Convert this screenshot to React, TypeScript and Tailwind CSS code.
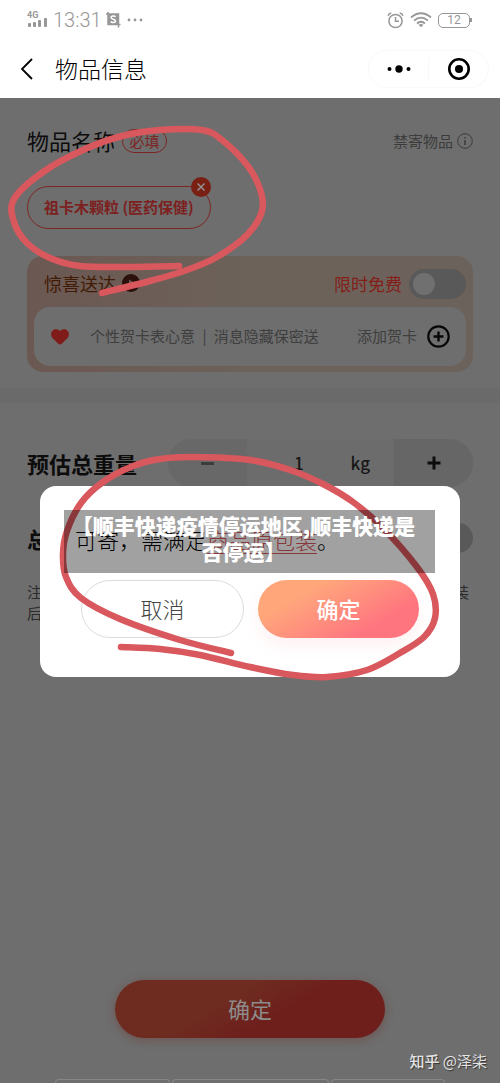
import { useState } from 'react'

function StatusBar() {
  return (
    <div className="flex h-10 items-center justify-between pr-7 pl-[27px] text-[#979797]">
      <div className="flex items-center">
        <svg width="22" height="20" viewBox="0 0 22 20" fill="currentColor" aria-hidden="true">
          <text x="0" y="8" fontSize="9" fontWeight="700" fontFamily="Roboto, sans-serif">
            4G
          </text>
          <rect x="1" y="13" width="3" height="4" rx="1" />
          <rect x="6" y="12" width="3" height="5" rx="1" />
          <rect x="11" y="10" width="3" height="7" rx="1" />
          <rect x="17" y="8" width="3" height="9" rx="1" />
        </svg>
        <span className="ml-1 font-[Roboto,sans-serif] text-xl leading-5 font-light">13:31</span>
        <svg className="ml-1" width="15" height="16" viewBox="0 0 15 16" aria-hidden="true">
          <path d="M0 2h12.500v13.500" fill="none" stroke="currentColor" strokeWidth="1.500" />
          <path d="M2 0v12.500h12.500" fill="none" stroke="currentColor" strokeWidth="1.500" />
          <rect x="2" y="2" width="10.500" height="10.500" fill="currentColor" />
          <path
            d="M9.500 4.800C8.500 3.600 5 3.700 5 5.600c0 2 4.500 1.200 4.500 3.300 0 2-3.700 2-4.800.6"
            fill="none"
            stroke="#fff"
            strokeWidth="1.500"
          />
        </svg>
        <svg className="ml-1.5" width="16" height="4" viewBox="0 0 16 4" fill="currentColor" aria-hidden="true">
          <circle cx="2" cy="2" r="1.400" />
          <circle cx="8" cy="2" r="1.400" />
          <circle cx="14" cy="2" r="1.400" />
        </svg>
      </div>
      <div className="flex items-center gap-1.5">
        <svg width="17" height="17" viewBox="0 0 17 17" fill="none" stroke="currentColor" strokeWidth="1.500" aria-hidden="true">
          <circle cx="8.500" cy="9" r="6.600" />
          <path d="M8.500 5v4.300h3.500M1 3.800Q1.800 1.300 4.300 1M12.700 1Q15.200 1.300 16 3.800" />
        </svg>
        <svg width="22" height="16" viewBox="0 0 22 16" fill="none" stroke="currentColor" strokeWidth="1.700" aria-hidden="true">
          <path d="M1 5.500Q11-3 21 5.500M4 8.700Q11 2.500 18 8.700M7 11.500Q11 8 15 11.500" />
          <path d="M8.500 12.800Q11 11 13.500 12.800L11 15.300Z" fill="currentColor" stroke="none" />
        </svg>
        <div className="flex items-center">
          <span className="flex h-[15px] w-8 items-center justify-center rounded-[5px] border border-[#979797] font-[Roboto,sans-serif] text-xs leading-3">
            12
          </span>
          <span className="h-1 w-0.5 bg-[#979797]" />
        </div>
      </div>
    </div>
  )
}

function NavBar() {
  return (
    <header className="flex h-[58px] items-center justify-between pr-[11px] pl-5 text-black">
      <div className="flex items-center">
        <button type="button" aria-label="返回">
          <svg width="14" height="22" viewBox="0 0 14 22" fill="none" stroke="currentColor" strokeWidth="1.800">
            <path d="M12 1 2 11l10 10" />
          </svg>
        </button>
        <h1 className="ml-[21px] pb-0.5 text-[23px] leading-8 font-light">物品信息</h1>
      </div>
      <div className="flex h-[38px] w-[121px] items-center rounded-full border border-[#f9f9f9]">
        <button type="button" aria-label="更多" className="flex flex-1 justify-center">
          <svg width="24" height="8" viewBox="0 0 24 8" fill="currentColor">
            <circle cx="2.500" cy="4" r="2" />
            <circle cx="12" cy="4" r="3.700" />
            <circle cx="21.500" cy="4" r="2" />
          </svg>
        </button>
        <span className="h-6 w-px bg-[#f9f9f9]" />
        <button type="button" aria-label="关闭" className="flex flex-1 justify-center">
          <svg width="22" height="22" viewBox="0 0 22 22">
            <circle cx="11" cy="11" r="9.700" fill="none" stroke="currentColor" strokeWidth="2.600" />
            <circle cx="11" cy="11" r="4" fill="currentColor" />
          </svg>
        </button>
      </div>
    </header>
  )
}

interface ToggleProps {
  label: string
}

function Toggle({ label }: ToggleProps) {
  const [on, setOn] = useState(false)

  return (
    <input
      type="checkbox"
      role="switch"
      aria-label={label}
      checked={on}
      onChange={(e) => setOn(e.target.checked)}
      className="h-[30px] w-[57px] appearance-none rounded-full bg-[#595959] p-1 before:block before:size-[22px] before:rounded-full before:bg-[#707070] checked:before:ml-auto"
    />
  )
}

function ItemSection() {
  return (
    <section className="px-[27px] pt-7">
      <div className="flex h-[30px] items-center justify-between">
        <div className="flex items-center gap-[7px]">
          <h2 className="pb-0.5 text-[22px] leading-[30px] text-[#0c0c0c]">物品名称</h2>
          <span className="flex h-6 w-[45px] items-center justify-center rounded-full border border-[#7c2624] text-[15px] text-[#7c2624]">
            必填
          </span>
        </div>
        <a href="#forbidden" className="flex items-center gap-1 text-[15px] text-[#3c3c3c]">
          禁寄物品
          <svg width="16" height="16" viewBox="0 0 16 16" fill="none" stroke="currentColor" aria-hidden="true">
            <circle cx="8" cy="8" r="7.300" strokeWidth="1" />
            <path d="M8 7v5M8 4v1.600" strokeWidth="1.500" />
          </svg>
        </a>
      </div>

      <div className="mt-[30px] flex">
        <div className="relative flex h-[43px] items-center rounded-full border border-[#7c2624] px-4 text-[15px] font-bold text-[#7c2020]">
          祖卡木颗粒 (医药保健)
          <button
            type="button"
            aria-label="删除"
            className="absolute -top-[10px] -right-px flex size-5 items-center justify-center rounded-full bg-[#7a1f14]"
          >
            <svg width="8" height="8" viewBox="0 0 8 8" stroke="#929292" strokeWidth="1.500">
              <path d="M.5.5l7 7M7.500.5l-7 7" />
            </svg>
          </button>
        </div>
      </div>

      <div className="mt-[27px] rounded-2xl bg-linear-to-r from-[#6b5852] via-[#6c6259] to-[#6c625c] px-[7px] pb-1.5">
        <div className="flex h-[51px] items-center justify-between pt-1 pl-[10px]">
          <div className="flex items-center gap-[6px] pb-0.5 text-lg text-[#421b06]">
            惊喜送达
            <svg width="18" height="18" viewBox="0 0 18 18" aria-hidden="true">
              <circle cx="9" cy="9" r="9" fill="#2c100b" />
              <path d="M7 5.500 12.500 9 7 12.500Z" fill="#6b5852" />
            </svg>
          </div>
          <div className="flex items-center gap-[7px] text-[17px] text-[#851d18]">
            限时免费
            <Toggle label="限时免费" />
          </div>
        </div>
        <div className="flex h-[59px] items-center rounded-2xl bg-[#6e6e6e] pr-4 pl-[17px] text-[#3e3e3e]">
          <svg width="18" height="16" viewBox="0 0 18 16" fill="#7f1c19" aria-hidden="true">
            <path d="M9 15.500Q8 15.500 7 14.500L1.700 9.200C-.6 6.700-.2 3.300 1.500 1.700 3.700-.4 7-.2 9 2c2-2.200 5.300-2.400 7.500-.3 1.700 1.600 2.100 5-.2 7.500L11 14.500Q10 15.500 9 15.500Z" />
          </svg>
          <p className="ml-[21px] flex-1 text-[15px] whitespace-nowrap">
            个性贺卡表心意<span className="mx-1"> | </span>消息隐藏保密送
          </p>
          <button type="button" className="flex items-center gap-[10px] text-[15px] whitespace-nowrap">
            添加贺卡
            <svg width="23" height="23" viewBox="0 0 23 23" fill="none" stroke="#080808" strokeWidth="2.200" aria-hidden="true">
              <circle cx="11.500" cy="11.500" r="10.200" />
              <path d="M11.500 6.500v10M6.500 11.500h10" strokeWidth="2.400" />
            </svg>
          </button>
        </div>
      </div>
    </section>
  )
}

function WeightSection() {
  const [weight, setWeight] = useState(1)

  return (
    <section className="px-[27px] pt-9">
      <div className="flex items-center justify-between">
        <h2 className="text-[22px] font-bold text-[#0c0c0c]">预估总重量</h2>
        <div className="flex h-12 w-[305px] items-stretch overflow-hidden rounded-full bg-[#6c6c6c] text-[17px] font-medium text-[#171717]">
          <button
            type="button"
            aria-label="减少"
            onClick={() => setWeight(Math.max(1, weight - 1))}
            className="flex w-[79px] items-center justify-center bg-[#686868]"
          >
            <span className="h-[3px] w-[13px] bg-[#3c3c3c]" />
          </button>
          <div className="flex flex-1 items-center pr-6">
            <input
              aria-label="预估总重量"
              value={weight}
              onChange={(e) => setWeight(Number(e.target.value) || 1)}
              className="w-0 flex-1 bg-transparent text-center outline-none"
            />
            kg
          </div>
          <button
            type="button"
            aria-label="增加"
            onClick={() => setWeight(weight + 1)}
            className="flex w-[79px] items-center justify-center bg-[#666]"
          >
            <svg width="14" height="14" viewBox="0 0 14 14" stroke="#0c0c0c" strokeWidth="3">
              <path d="M7 .5v13M.5 7h13" />
            </svg>
          </button>
        </div>
      </div>
      <div className="mt-9 flex h-[30px] items-center justify-between">
        <h2 className="text-[22px] font-bold text-[#0c0c0c]">总</h2>
        <Toggle label="总" />
      </div>
      <div className="mt-7 text-[15px] leading-[21px] text-[#2c2c2c]">
        <p className="flex justify-between pr-1">
          <span>注</span>
          <span>装</span>
        </p>
        <p>后</p>
      </div>
    </section>
  )
}

function ConfirmDialog() {
  return (
    <div role="dialog" aria-label="寄件提示" className="absolute inset-x-10 top-[486px] rounded-2xl bg-white pt-[38px] pb-[39px]">
      <p className="px-[35px] text-[22px] leading-[30px] font-light whitespace-nowrap text-black">
        可寄，需满足
        <a href="#package" className="text-[#d8575c] underline decoration-1 underline-offset-4">
          商品原包装
        </a>
        。
      </p>
      <div className="mt-[26px] flex gap-[14px] px-[41px] text-[22px]">
        <button type="button" className="h-[58px] flex-1 rounded-full border border-[#dcdcdc] pb-0.5 font-light text-[#444]">
          取消
        </button>
        <button
          type="button"
          className="h-[58px] flex-1 rounded-full bg-linear-150 from-[#ffa77b] from-25% to-[#ff757f] to-75% pb-0.5 font-medium text-white shadow-[0_8px_16px_#ff757f1a]"
        >
          确定
        </button>
      </div>
    </div>
  )
}

type Point = [number, number]

const upperCircle: Point[] = [
  [179, 266], [130, 267], [80, 266], [50, 258], [27, 243], [14, 222], [14, 199], [43, 172], [83, 150], [122, 136],
  [160, 130], [202, 130], [222, 140], [247, 165], [260, 189], [262, 211], [247, 235], [217, 257], [187, 270], [150, 281],
  [102, 293],
]

const lowerCircle: Point[] = [
  [231, 653], [180, 640], [120, 619], [81, 598], [66, 577], [63, 554], [67, 531], [81, 503], [103, 482], [133, 466],
  [160, 459], [193, 457], [250, 460], [290, 470], [323, 484], [353, 502], [383, 528], [417, 567], [433, 594], [435, 618],
  [424, 637], [400, 653], [367, 670], [327, 677], [293, 675], [250, 667], [200, 655], [160, 649], [121, 647],
]

// runs a curve through every point
function smoothPath(points: Point[]) {
  let d = `M${points[0].join(' ')}`
  for (let i = 0; i < points.length - 1; i++) {
    const a = points[Math.max(0, i - 1)]
    const b = points[i]
    const c = points[i + 1]
    const e = points[Math.min(points.length - 1, i + 2)]
    d += `C${b[0] + (c[0] - a[0]) / 6} ${b[1] + (c[1] - a[1]) / 6} ${c[0] - (e[0] - b[0]) / 6} ${c[1] - (e[1] - b[1]) / 6} ${c[0]} ${c[1]}`
  }
  return d
}

function Marker() {
  return (
    <svg
      className="pointer-events-none absolute top-0 left-0"
      width="500"
      height="720"
      viewBox="0 0 500 720"
      fill="none"
      stroke="#d9585d"
      strokeWidth="6.500"
      strokeLinecap="round"
      strokeLinejoin="round"
      aria-hidden="true"
    >
      <path d={smoothPath(upperCircle)} />
      <path d={smoothPath(lowerCircle)} />
    </svg>
  )
}

export default function App() {
  return (
    <div className="relative flex min-h-screen flex-col overflow-hidden bg-white font-['Noto_Sans_CJK_SC',sans-serif]">
      <StatusBar />
      <NavBar />

      <main className="flex flex-1 flex-col bg-[#6e6e6e]">
        <ItemSection />
        <div className="mt-4 h-[15px] shrink-0 bg-[#6a6a6a]" />
        <WeightSection />

        <div className="mt-auto flex flex-col items-center">
          <button
            type="button"
            className="h-[58px] w-[54%] rounded-full bg-linear-150 from-[#6e2b20] from-40% to-[#6e1f1c] to-60% pb-0.5 text-[22px] text-[#8c8c8c] shadow-[0_2px_10px_#6e2b2066]"
          >
            确定
          </button>
          <div className="mt-[41px] flex h-1 w-[78%] gap-0.5">
            <span className="w-[115px] rounded-t-sm border border-b-0 border-[#868686]" />
            <span className="flex-1 rounded-t-sm border border-b-0 border-[#868686]" />
            <span className="w-[114px] rounded-t-sm border border-b-0 border-[#868686]" />
          </div>
        </div>
      </main>

      <p className="absolute right-[13px] bottom-[11px] text-[15px] leading-[22px] text-[#e4e4e4] [text-shadow:1px_1px_1px_#333]">
        <span className="font-medium">知乎</span> @泽柒
      </p>

      <ConfirmDialog />
      <Marker />

      {/* Caption over the dialog */}
      <p className="absolute inset-x-16 top-[510px] mr-px bg-black/37 pt-0.5 pr-3 pb-[9px] text-center text-[21px] leading-[26px] font-black whitespace-nowrap text-white">
        【顺丰快递疫情停运地区,顺丰快递是
        <br />
        否停运】
      </p>
    </div>
  )
}
